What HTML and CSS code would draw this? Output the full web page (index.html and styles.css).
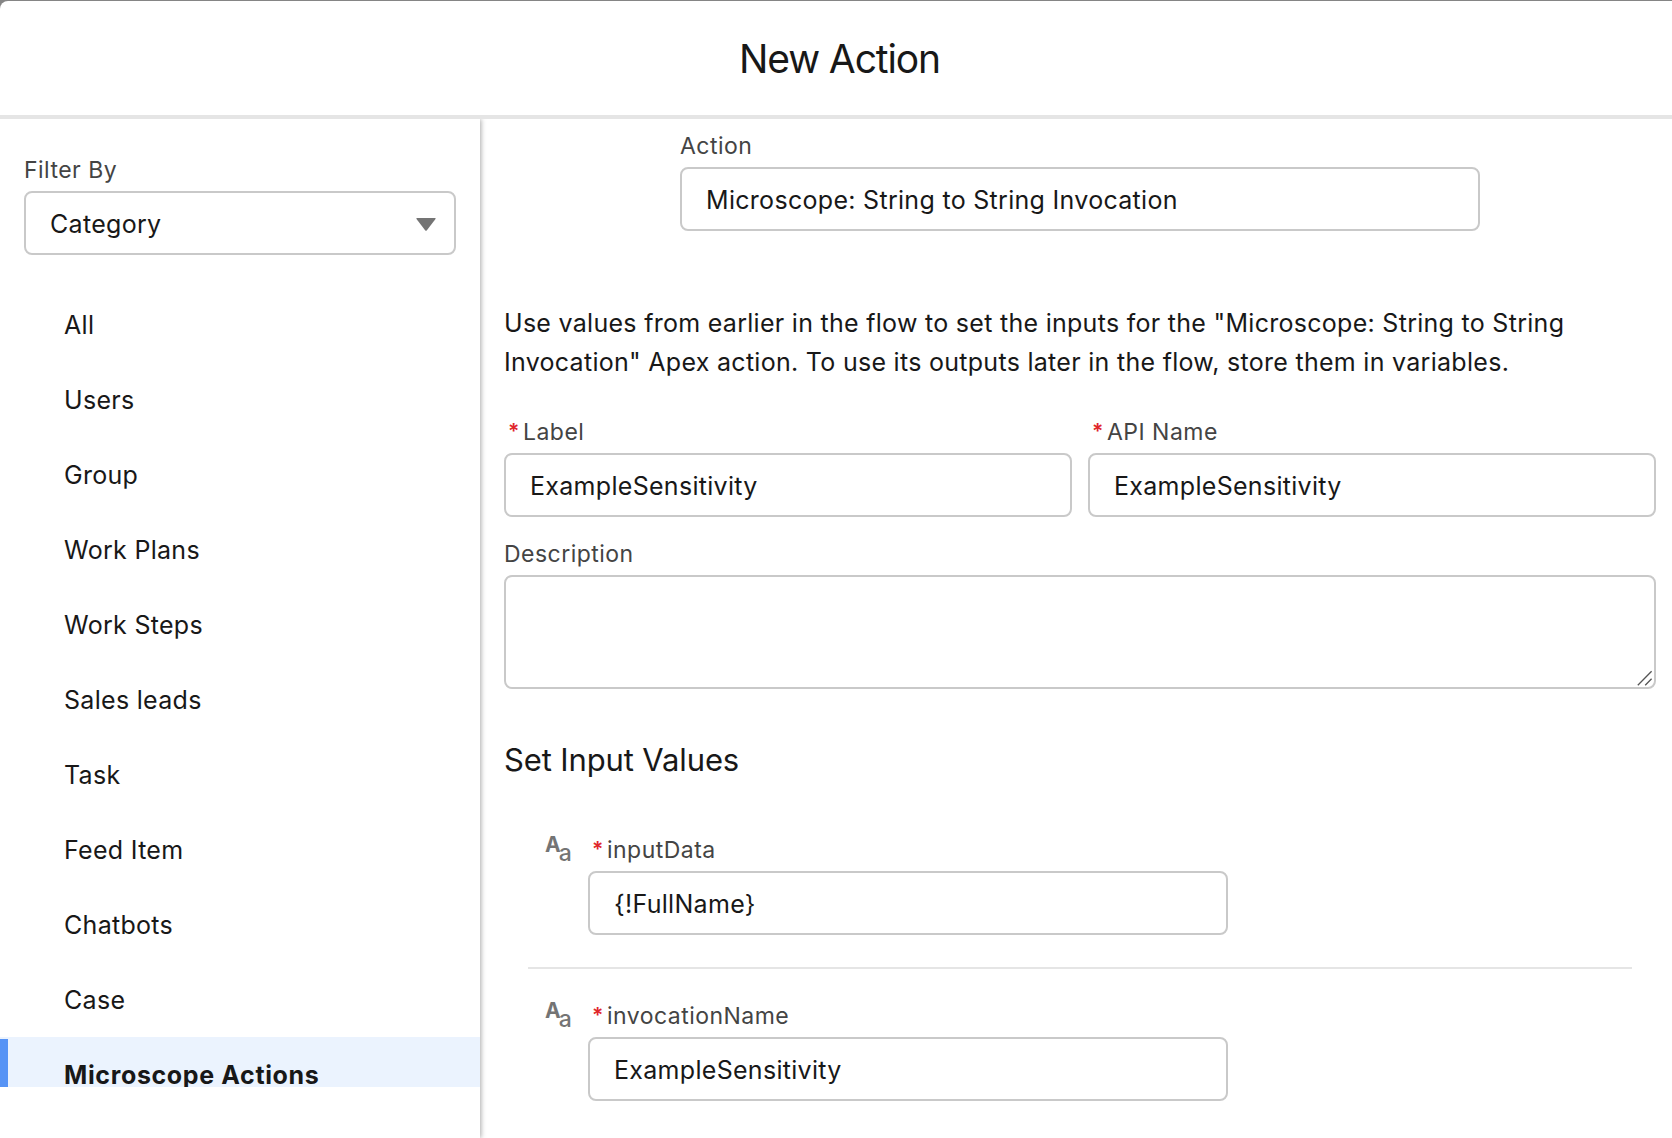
FILE: index.html
```html
<!DOCTYPE html>
<html lang="en">
<head>
<meta charset="utf-8">
<title>New Action</title>
<link rel="stylesheet" href="styles.css">
</head>
<body>
<div class="modal">
  <header class="modal-header">
    <h1 class="modal-title">New Action</h1>
  </header>
  <div class="modal-body">
    <aside class="sidebar">
      <div class="field">
        <div class="label">Filter By</div>
        <div class="box select">
          <span>Category</span>
          <svg class="caret" width="20" height="13" viewBox="0 0 20 13"><path d="M1 0h18q1.2 0 .5 1l-8.6 11.3q-.9 1-1.8 0L.5 1Q-.2 0 1 0z" fill="#747474"/></svg>
        </div>
      </div>
      <ul class="categories">
        <li class="category">All</li>
        <li class="category">Users</li>
        <li class="category">Group</li>
        <li class="category">Work Plans</li>
        <li class="category">Work Steps</li>
        <li class="category">Sales leads</li>
        <li class="category">Task</li>
        <li class="category">Feed Item</li>
        <li class="category">Chatbots</li>
        <li class="category">Case</li>
        <li class="category selected">Microscope Actions</li>
      </ul>
    </aside>
    <main class="content">
      <div class="field action-field">
        <div class="label">Action</div>
        <div class="box">Microscope: String to String Invocation</div>
      </div>
      <p class="intro">Use values from earlier in the flow to set the inputs for the "Microscope: String to String<br>Invocation" Apex action. To use its outputs later in the flow, store them in variables.</p>
      <div class="field-row">
        <div class="field">
          <div class="label required"><span class="star">*</span>Label</div>
          <div class="box">ExampleSensitivity</div>
        </div>
        <div class="field">
          <div class="label required"><span class="star">*</span>API Name</div>
          <div class="box">ExampleSensitivity</div>
        </div>
      </div>
      <div class="field description">
        <div class="label">Description</div>
        <div class="box textarea">
          <svg class="grip" width="16" height="16" viewBox="0 0 16 16" fill="none" stroke="#555" stroke-width="1.3"><path d="M.8 15.2 14.6 1.2M8.2 15.2l6.4-6.4"/></svg>
        </div>
      </div>
      <h2 class="section-title">Set Input Values</h2>
      <div class="inputs">
        <div class="input-row">
          <div class="type-icon"><span class="upper">A</span><span class="lower">a</span></div>
          <div class="field">
            <div class="label required"><span class="star">*</span>inputData</div>
            <div class="box">{!FullName}</div>
          </div>
        </div>
        <div class="input-row">
          <div class="type-icon"><span class="upper">A</span><span class="lower">a</span></div>
          <div class="field">
            <div class="label required"><span class="star">*</span>invocationName</div>
            <div class="box">ExampleSensitivity</div>
          </div>
        </div>
      </div>
    </main>
  </div>
</div>
</body>
</html>
```
FILE: styles.css
```css
* { box-sizing: border-box; }

body {
  margin: 0;
  padding-top: 1px;
  height: 1138px;
  overflow: hidden;
  background: #858585;
  color: #181818;
  font-family: Inter, "Liberation Sans", sans-serif;
  font-size: 25px;
  letter-spacing: 0.3px;
}

.modal {
  display: flex;
  flex-direction: column;
  height: 1137px;
  background: #fff;
  border-top-left-radius: 8px;
}

.modal-header {
  height: 118px;
  padding-left: 7px;
  border-bottom: 4px solid #e5e5e5;
}

.modal-title {
  margin: 0;
  font-size: 39px;
  font-weight: 400;
  line-height: 116px;
  height: 114px;
  letter-spacing: -1.1px;
  text-align: center;
}

.modal-body {
  display: flex;
  flex: 1;
  min-height: 0;
  overflow: hidden;
}

.sidebar {
  width: 480px;
  padding-top: 33px;
  box-shadow: 1px 0 5px rgba(0, 0, 0, 0.34);
}

.sidebar .field { margin: 0 24px; }

.field { display: flex; flex-direction: column; gap: 3px; }

.label {
  height: 36px;
  line-height: 36px;
  font-size: 23px;
  letter-spacing: 0.47px;
  color: #444;
}

.required { padding-left: 4px; }

.star {
  display: inline-block;
  width: 15px;
  font-size: 21px;
  font-weight: 600;
  line-height: 20px;
  vertical-align: 1px;
  color: #e0262b;
}

.box {
  height: 64px;
  padding: 1px 24px 0;
  border: 2px solid #c9c9c9;
  border-radius: 8px;
  line-height: 60px;
  white-space: nowrap;
}

.select {
  display: flex;
  justify-content: space-between;
  align-items: center;
  padding-right: 18px;
}

.caret { margin-top: 2px; }

.categories {
  list-style: none;
  margin: 32px 0 0;
  padding: 0;
  height: 800px;
  overflow: hidden;
}

.category {
  height: 75px;
  line-height: 77px;
  padding-left: 64px;
}

.selected {
  background: linear-gradient(#5693f5, #5693f5) 0 2px / 8px 73px no-repeat #ebf3fe;
  font-weight: 700;
  letter-spacing: 0.64px;
}

.content {
  flex: 1;
  padding: 9px 16px 0 24px;
}

.action-field { width: 800px; margin: 0 auto; }

.intro {
  margin: 73px 0 32px;
  line-height: 39px;
  letter-spacing: 0.285px;
  white-space: nowrap;
}

.field-row { display: grid; grid-template-columns: 1fr 1fr; gap: 16px; }

.description { margin-top: 19px; }

.textarea {
  display: flex;
  justify-content: flex-end;
  align-items: flex-end;
  height: 114px;
  padding: 0 1px 1px;
}

.section-title {
  margin: 51px 0 52px;
  font-size: 31px;
  font-weight: 400;
  line-height: 40px;
  letter-spacing: -0.13px;
}

.inputs { padding: 0 24px; }

.input-row {
  display: flex;
  padding-left: 17px;
}

.input-row + .input-row {
  margin-top: 32px;
  padding-top: 29px;
  border-top: 2px solid #e5e5e5;
}

.input-row .field { width: 640px; }

.type-icon {
  display: flex;
  width: 43px;
  line-height: 26px;
  letter-spacing: 0;
  color: #747474;
}

.upper { font-size: 21px; font-weight: 700; }

.lower {
  font-size: 23px;
  font-weight: 500;
  margin: 8px 0 0 -2px;
}
```
